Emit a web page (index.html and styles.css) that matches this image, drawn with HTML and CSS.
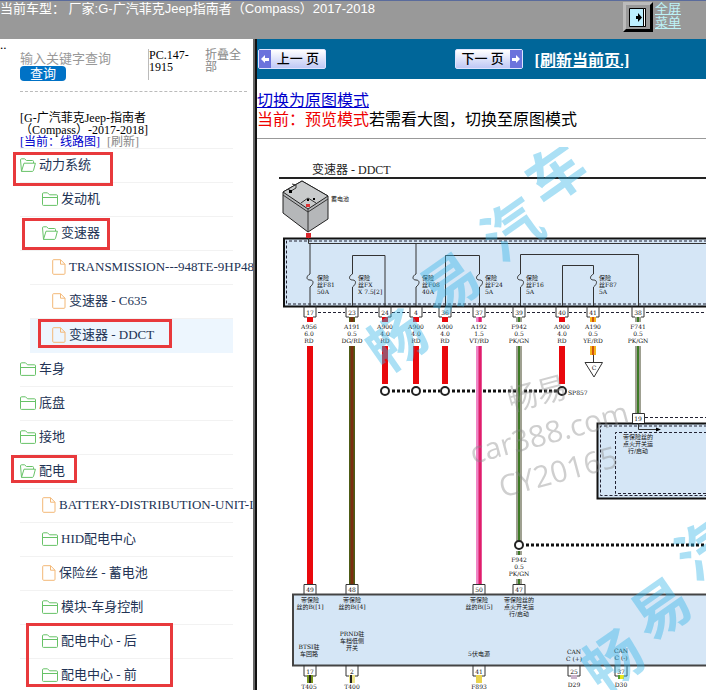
FILE: index.html
```
<!DOCTYPE html>
<html lang="zh-CN">
<head>
  <meta charset="UTF-8">
  <meta name="viewport" content="width=device-width, initial-scale=1.0">
  <title>变速器 - DDCT</title>
  <link rel="stylesheet" href="styles.css">
</head>
<body>
  <svg class="defs" aria-hidden="true">
    <symbol id="folder" viewBox="0 0 16 14">
      <path d="M.5 12.5V2Q.5.8 1.6.8H5.5L7.5 2.8H14.5Q15.5 2.8 15.5 3.8V12.5Q15.5 13.4 14.6 13.4H1.4Q.5 13.4.5 12.5ZM.5 5.5H15.5"/>
    </symbol>
    <symbol id="folder-open" viewBox="0 0 16 14">
      <path d="M1.5 13.4L.5 1.8Q.5.8 1.6.8H4.5L6.5 2.5H12.5Q13.5 2.5 13.5 3.5V5M1.5 13.4L4 5.2H15.4L13.5 12.4Q13.2 13.4 12.3 13.4Z"/>
    </symbol>
    <symbol id="file" viewBox="0 0 14 16">
      <path d="M1.5.7H8.5L13 5.2V14.3Q13 15.3 12 15.3H1.7Q.7 15.3.7 14.3V1.5Q.7.7 1.5.7ZM8.5.7V5.2H13"/>
    </symbol>
  </svg>

  <header class="top">
    <div class="model">当前车型： 厂家:G-广汽菲克Jeep指南者（Compass）2017-2018</div>
    <button type="button" class="toggle" aria-label="全屏菜单">
      <svg width="17" height="19" viewBox="0 0 17 19"><path fill="#bdefff" stroke="#000" d="M.5.5H16.5V18.5H.5Z"/><path fill="#fff" stroke="#000" d="M14.5.5H16.5V18.5H14.5Z"/><path d="M7 8H9V5L13 9.500L9 14V11H7Z"/></svg>
    </button>
    <a href="#" class="fullscreen">全屏<br>菜单</a>
  </header>

  <div class="frames">
    <aside class="side">
      <span class="dots">..</span>
      <form class="search">
        <div class="query">
          <input type="text" placeholder="输入关键字查询" aria-label="输入关键字查询">
          <button type="button">查询</button>
        </div>
        <div class="version">PC.147-1915</div>
        <a href="#" class="fold">折叠全部</a>
      </form>
      <div class="current">
        <div>[G-广汽菲克Jeep-指南者（Compass）-2017-2018]</div>
        <a href="#" class="now">[当前：线路图]</a> <a href="#" class="reload">[刷新]</a>
      </div>

      <ul class="tree">
        <li>
          <div class="row"><a href="#"><svg class="folder"><use href="#folder-open"/></svg>动力系统</a><i class="mark mark-power"></i></div>
          <ul class="sub">
            <li><div class="row"><a href="#"><svg class="folder"><use href="#folder"/></svg>发动机</a></div></li>
            <li>
              <div class="row"><a href="#"><svg class="folder"><use href="#folder-open"/></svg>变速器</a><i class="mark mark-gear"></i></div>
              <ul class="leaf">
                <li><div class="row"><a href="#"><svg class="file"><use href="#file"/></svg>TRANSMISSION---948TE-9HP48</a></div></li>
                <li><div class="row"><a href="#"><svg class="file"><use href="#file"/></svg>变速器 - C635</a></div></li>
                <li><div class="row active"><a href="#"><svg class="file"><use href="#file"/></svg>变速器 - DDCT</a><i class="mark mark-ddct"></i></div></li>
              </ul>
            </li>
          </ul>
        </li>
        <li><div class="row"><a href="#"><svg class="folder"><use href="#folder"/></svg>车身</a></div></li>
        <li><div class="row"><a href="#"><svg class="folder"><use href="#folder"/></svg>底盘</a></div></li>
        <li><div class="row"><a href="#"><svg class="folder"><use href="#folder"/></svg>接地</a></div></li>
        <li>
          <div class="row"><a href="#"><svg class="folder"><use href="#folder-open"/></svg>配电</a><i class="mark mark-dist"></i></div>
          <ul class="sub">
            <li><div class="row"><a href="#"><svg class="file"><use href="#file"/></svg>BATTERY-DISTRIBUTION-UNIT-L</a></div></li>
            <li><div class="row"><a href="#"><svg class="folder"><use href="#folder"/></svg>HID配电中心</a></div></li>
            <li><div class="row"><a href="#"><svg class="file"><use href="#file"/></svg>保险丝 - 蓄电池</a></div></li>
            <li><div class="row"><a href="#"><svg class="folder"><use href="#folder"/></svg>模块-车身控制</a></div></li>
            <li><div class="row"><a href="#"><svg class="folder"><use href="#folder"/></svg>配电中心 - 后</a><i class="mark mark-center"></i></div></li>
            <li><div class="row"><a href="#"><svg class="folder"><use href="#folder"/></svg>配电中心 - 前</a></div></li>
          </ul>
        </li>
      </ul>
    </aside>

    <main class="main">
      <nav class="pager">
        <div class="prev"><button type="button"><svg width="12" height="18" viewBox="0 0 12 18"><path fill="#6b73dc" d="M0 0H12V18H0Z"/><path fill="#fff" d="M2 9L6 5V8H10V11H6V13Z"/></svg><span>上一 页</span></button></div>
        <button type="button"><span>下一 页</span><svg width="12" height="18" viewBox="0 0 12 18"><path fill="#6b73dc" d="M0 0H12V18H0Z"/><path fill="#fff" d="M10 9L6 5V8H2V11H6V13Z"/></svg></button>
        <a href="#">[刷新当前页.]</a>
      </nav>
      <div class="mode">
        <a href="#">切换为原图模式</a>
        <p><span class="red">当前：预览模式</span>若需看大图，切换至原图模式</p>
      </div>
      <hr>
      <svg class="diagram" width="600" height="600" viewBox="257 139 600 600">
        <defs>
          <path id="pin" d="M-6 11V0M6 11V0M-6 11H-3M3 11H6"/>
          <path id="fuse" d="M0-6C-4-4-4 0 0 0S4 4 0 7"/>
          <clipPath id="sheet"><path d="M257 147H857V739H257Z"/></clipPath>
        </defs>

        <text class="title" x="312" y="174">变速器 - DDCT</text>
        <path class="thick" d="M279 178H857"/>

        <!-- battery -->
        <path fill="#b5b7b9" stroke="#222" d="M283 192L302 181L328 196V219L308 232L283 213Z"/>
        <path fill="#c9cbcc" stroke="#222" d="M283 192L302 181L328 196L308 209Z"/>
        <path class="line" d="M283 195L308 212L328 199M308 209V232M301 203L308 198L316 203M288 189L291 191L296 188V185L292 184"/>
        <path fill="#d33" d="M306 204H310V207H306Z"/>
        <path d="M289 190H292V193H289ZM307 199H309V201H307ZM313 198H315V200H313Z"/>
        <text class="label" x="331" y="201">蓄电池</text>

        <!-- modules -->
        <path class="box" d="M284 238.500H857V306.500H284Z"/>
        <path class="dash" d="M857 241H286.500V304H857"/>
        <path class="box" d="M597.500 423.500H857V498.500H597.500Z"/>
        <path class="dash" d="M857 426H600.500V495.500H857M857 432.500H615.500V493.500H857M645 417.500H857"/>
        <path class="box thin" d="M293 594.500H857V665.500H293Z"/>
        <path fill="#d9262c" d="M306 233H311V238H306Z"/>

        <!-- internal wiring -->
        <path class="line" d="M308.500 238V243.500H857M310 243V274M310 287V306M352.500 274V255.500H385V306M352.500 287V306M416 243V274M416 287V306M445.500 306V255.500H479.500V274M479.500 287V306M520.500 274V254.500H638.500V306M520.500 287V306M562.500 306V265.500H593.500V274M593.500 287V306M638.500 423V429.500H657"/>
        <path d="M656 427.500L661 429.500L656 431.500Z"/>
        <g class="line">
          <use href="#fuse" x="310" y="280"/><use href="#fuse" x="352.500" y="280"/><use href="#fuse" x="416" y="280"/>
          <use href="#fuse" x="479.500" y="280"/><use href="#fuse" x="520.500" y="280"/><use href="#fuse" x="593.500" y="280"/>
        </g>
        <g class="label">
          <text x="317" y="280">保险<tspan x="317" y="287">丝F81</tspan><tspan x="317" y="294">50A</tspan></text>
          <text x="358" y="280">保险<tspan x="358" y="287">丝FX</tspan><tspan x="358" y="294">X 7.5[2]</tspan></text>
          <text x="422" y="280">保险<tspan x="422" y="287">丝F08</tspan><tspan x="422" y="294">40A</tspan></text>
          <text x="485" y="280">保险<tspan x="485" y="287">丝F24</tspan><tspan x="485" y="294">5A</tspan></text>
          <text x="526" y="280">保险<tspan x="526" y="287">丝F16</tspan><tspan x="526" y="294">5A</tspan></text>
          <text x="599" y="280">保险<tspan x="599" y="287">丝F87</tspan><tspan x="599" y="294">5A</tspan></text>
        </g>

        <!-- connector pins -->
        <path class="dash" d="M318 312.500H345M360 312.500H378M392 312.500H409M423 312.500H438M452 312.500H472M486 312.500H512M527 312.500H555M569 312.500H586M601 312.500H631M646 312.500H857"/>
        <g class="line">
          <use href="#pin" x="310" y="306"/><use href="#pin" x="352" y="306"/><use href="#pin" x="385" y="306"/>
          <use href="#pin" x="416" y="306"/><use href="#pin" x="445" y="306"/><use href="#pin" x="479" y="306"/>
          <use href="#pin" x="519" y="306"/><use href="#pin" x="562" y="306"/><use href="#pin" x="593" y="306"/>
          <use href="#pin" x="638" y="306"/>
          <use href="#pin" x="310" y="665"/><use href="#pin" x="352" y="665"/><use href="#pin" x="479" y="665"/>
          <use href="#pin" x="574" y="665"/><use href="#pin" x="621" y="665"/>
          <path d="M304 594V584.500H316V594M346 594V584.500H358V594M473 594V584.500H485V594M513 594V584.500H525V594"/>
          <path fill="#fff" d="M632.500 423V413.500H644.500V423"/>
        </g>
        <g class="label center">
          <text x="310" y="315">17</text><text x="352" y="315">23</text><text x="385" y="315">24</text>
          <text x="416" y="315">4</text><text x="445" y="315">36</text><text x="479" y="315">37</text>
          <text x="519" y="315">39</text><text x="562" y="315">40</text><text x="593" y="315">41</text>
          <text x="638" y="315">38</text><text x="638" y="421">19</text>
          <text x="310" y="592">49</text><text x="352" y="592">48</text><text x="479" y="592">50</text><text x="519" y="592">47</text>
          <text x="310" y="674">17</text><text x="352" y="674">2</text><text x="479" y="674">41</text>
          <text x="574" y="674">25</text><text x="621" y="674">37</text>
        </g>
        <g class="label center">
          <text x="309" y="329">A956<tspan x="309" y="336">6.0</tspan><tspan x="309" y="343">RD</tspan></text>
          <text x="352" y="329">A191<tspan x="352" y="336">0.5</tspan><tspan x="352" y="343">DG/RD</tspan></text>
          <text x="385" y="329">A900<tspan x="385" y="336">4.0</tspan><tspan x="385" y="343">RD</tspan></text>
          <text x="416" y="329">A900<tspan x="416" y="336">4.0</tspan><tspan x="416" y="343">RD</tspan></text>
          <text x="445" y="329">A900<tspan x="445" y="336">4.0</tspan><tspan x="445" y="343">RD</tspan></text>
          <text x="479" y="329">A192<tspan x="479" y="336">1.5</tspan><tspan x="479" y="343">VT/RD</tspan></text>
          <text x="519" y="329">F942<tspan x="519" y="336">0.5</tspan><tspan x="519" y="343">PK/GN</tspan></text>
          <text x="562" y="329">A900<tspan x="562" y="336">4.0</tspan><tspan x="562" y="343">RD</tspan></text>
          <text x="593" y="329">A190<tspan x="593" y="336">0.5</tspan><tspan x="593" y="343">YE/RD</tspan></text>
          <text x="638" y="329">F741<tspan x="638" y="336">0.5</tspan><tspan x="638" y="343">PK/GN</tspan></text>
        </g>

        <!-- wires -->
        <path class="wire" stroke="#e9080d" d="M310 317V322M385 317V322M416 317V322M445 317V322M562 317V322M310 346V584M385 346V384M416 346V384M445 346V384M562 346V384"/>
        <path class="wire" stroke="#4d5c16" d="M352 317V322M352 346V584"/>
        <path stroke="#7b2e10" stroke-width="3" d="M352 317V322M352 346V584"/>
        <path class="wire" stroke="#ee86c6" d="M479 317V322M479 346V584"/>
        <path stroke="#e01f68" stroke-width="3" d="M480 317V322M480 346V584"/>
        <path class="wire" stroke="#9fa091" d="M519 317V322M519 346V541M519 551V555M519 579V584M638 317V322M638 346V413"/>
        <path stroke="#3d7a25" stroke-width="2" d="M519 317V322M519 346V541M519 551V555M519 579V584M638 317V322M638 346V413"/>
        <path class="wire" stroke="#f6b51e" d="M593 317V322M593 346V355"/>
        <path stroke="#d3540c" stroke-width="2" d="M593 317V322M593 346V355"/>
        <path class="line" d="M593.500 355V362M585 362.500H602.500L594 377Z"/>
        <path class="wire" stroke="#77951b" d="M310 675V683"/>
        <path class="wire" stroke="#eee58a" d="M352 675V683"/>
        <path stroke="#222" stroke-width="2" d="M310 675V683M351 675V683"/>
        <path class="wire" stroke="#e9d34e" d="M479 675V683"/>
        <path class="wire" stroke="#c9b2ca" d="M574 675V679"/>
        <path class="wire" stroke="#e8e51c" d="M621 675V679"/>
        <path stroke="#55a02b" stroke-width="2" d="M619 675V679"/>

        <!-- splices -->
        <path class="splice" d="M392 391H411M423 391H440M452 391H476M483 391H516M524 391H557M526 545H857"/>
        <g class="ring">
          <circle cx="385" cy="391" r="4"/><circle cx="416" cy="391" r="4"/><circle cx="445" cy="391" r="4"/>
          <circle cx="562" cy="391" r="4"/><circle cx="519" cy="545" r="4"/>
        </g>
        <text class="label" x="568" y="395">SP857</text>

        <g class="label center">
          <text x="594" y="370">C</text>
          <text x="638" y="439">带保险丝的<tspan x="638" y="446">点火开关运</tspan><tspan x="638" y="453">行/启动</tspan></text>
          <text x="519" y="562">F942<tspan x="519" y="569">0.5</tspan><tspan x="519" y="576">PK/GN</tspan></text>
          <text x="310" y="602">带保险<tspan x="310" y="609">丝的B([1]</tspan></text>
          <text x="352" y="602">带保险<tspan x="352" y="609">丝的B([4]</tspan></text>
          <text x="479" y="602">带保险<tspan x="479" y="609">丝的B([5]</tspan></text>
          <text x="519" y="602">带保险丝的<tspan x="519" y="609">点火开关运</tspan><tspan x="519" y="616">行/启动</tspan></text>
          <text x="309" y="649">BTSI驻<tspan x="309" y="656">车回路</tspan></text>
          <text x="352" y="636">PRND驻<tspan x="352" y="643">车档低侧</tspan><tspan x="352" y="650">开关</tspan></text>
          <text x="479" y="656">5伏电源</text>
          <text x="574" y="654">CAN<tspan x="574" y="661">C (+)</tspan></text>
          <text x="621" y="653">CAN<tspan x="621" y="660">C (-)</tspan></text>
          <text x="309" y="689">T405</text><text x="352" y="689">T400</text><text x="479" y="689">F893</text>
          <text x="574" y="687">D29</text><text x="621" y="687">D30</text>
        </g>

        <!-- watermarks -->
        <g clip-path="url(#sheet)">
          <g class="brush">
            <text transform="translate(397 341) rotate(-35)" y="21">畅</text>
            <text transform="translate(450 284) rotate(-35)" y="21">易</text>
            <text transform="translate(512 230) rotate(-35)" y="21">汽</text>
            <text transform="translate(556 174) rotate(-35)" y="21">车</text>
            <text transform="translate(613 661) rotate(-35)" y="21">畅</text>
            <text transform="translate(661 609) rotate(-35)" y="21">易</text>
            <text transform="translate(706 549) rotate(-35)" y="21">汽</text>
          </g>
        </g>
        <g class="stamp">
          <text transform="translate(540 404) rotate(-15)">畅易</text>
          <text transform="translate(552 443) rotate(-15)">car388.com</text>
          <text transform="translate(561 482) rotate(-15)">CY20165</text>
        </g>
      </svg>
    </main>
  </div>
</body>
</html>
```

FILE: styles.css
```
* { box-sizing: border-box; }
body { margin: 0; height: 100vh; display: flex; flex-direction: column; overflow: hidden; background: #fff; font-family: "Liberation Serif", "Noto Sans CJK SC", serif; font-size: 13px; }
ul { list-style: none; margin: 0; padding: 0; }
a { text-decoration: none; }
button { font-family: inherit; cursor: pointer; }
.defs { display: none; }

/* top bar */
.top { flex: none; display: flex; align-items: flex-start; height: 39px; padding-right: 25px; background: #999; border-top: 1px solid #5a6b9c; color: #fff; font-family: "Liberation Sans", "Noto Sans CJK SC", sans-serif; }
.model { flex: 1; line-height: 16px; white-space: nowrap; }
.toggle { display: flex; align-items: center; justify-content: center; width: 30px; height: 30px; margin: 1px 2px 0 0; padding: 0; background: #999; border: 3px solid; border-color: #bbb #000 #000 #bbb; }
.fullscreen { padding-top: 1px; color: #bdf3f7; line-height: 14px; text-decoration: underline; }

.frames { flex: 1; min-height: 0; display: flex; }

/* left menu */
.side { position: relative; flex: none; width: 255px; padding: 10px 0 0 20px; overflow: hidden; border-right: 2px solid #666; }
.dots { position: absolute; left: 0; top: 0; line-height: 12px; }
.search { display: flex; align-items: flex-start; height: 43px; margin-right: 6px; border-bottom: 1px dashed #bbb; font-size: 12px; line-height: 12px; }
.query { display: flex; flex-direction: column; align-items: flex-start; width: 128px; }
.query input { width: 91px; height: 17px; padding: 3px 0 0; border: 0; outline: 0; font-family: inherit; font-size: 13px; line-height: 14px; }
.query input::placeholder { color: #999; }
.query button { width: 46px; height: 15px; padding: 0; border: 0; border-radius: 4px; background: #0072c6; color: #fff; font-size: 13px; line-height: 15px; }
.version { width: 57px; height: 31px; border-left: 1px solid #bbb; }
.fold { width: 38px; color: #888; word-break: break-all; }
.current { height: 57px; margin-right: 20px; padding-top: 20px; border-bottom: 1px solid #f2f2f2; font-size: 12px; line-height: 12px; }
.current div { width: 132px; }
.now { color: #00c; }
.reload { margin-left: 4px; color: #888; }

.row { position: relative; height: 34px; margin-right: 20px; border-bottom: 1px solid #f2f2f2; line-height: 32px; white-space: nowrap; }
.row a { display: flex; align-items: center; color: #223355; }
.sub .row a { padding-left: 22px; }
.leaf .row { margin-left: 10px; }
.active { background: #edf6fe; border-color: #edf6fe; }
.row svg { flex: none; margin-right: 3px; fill: none; }
.folder { width: 16px; height: 14px; stroke: #67c267; }
.file { width: 14px; height: 16px; stroke: #f3b877; }

/* red frames over the menu */
.mark { position: absolute; z-index: 1; border: 3px solid #e8393c; pointer-events: none; }
.mark-power { left: -7px; top: 3px; width: 100px; height: 34px; }
.mark-gear { left: 2px; top: 1px; width: 88px; height: 32px; }
.mark-ddct { left: 8px; top: 0; width: 134px; height: 29px; }
.mark-dist { left: -9px; top: 0; width: 66px; height: 28px; }
.mark-center { left: 6px; top: -2px; width: 147px; height: 64px; }

/* right page */
.main { flex: 1; min-width: 0; overflow: hidden; border-left: 2px solid #111; font-size: 16px; }
.pager { display: flex; align-items: center; height: 40px; background: #069; }
.prev { width: 44%; padding-left: 1px; }
.pager button { display: flex; align-items: center; width: 68px; height: 20px; padding: 0; border: 1px solid #dfe4ff; border-radius: 2px; background: linear-gradient(#fff, #bfc8f6); font-size: 13px; font-weight: 500; line-height: 18px; }
.pager button span { flex: 1; text-align: center; white-space: nowrap; }
.pager a { margin-left: 12px; color: #fff; font-weight: bold; text-decoration: underline; }
.mode { padding-top: 12px; line-height: 19px; white-space: nowrap; }
.mode a { color: #00c; text-decoration: underline; }
.mode p { margin: 0; }
.red { color: #e00; }
hr { margin: 9px 0 0; border: 0; border-top: 1px solid #999; }

/* wiring diagram */
.diagram { display: block; }
.title { font-size: 12px; fill: #222; }
.label { font-family: "DejaVu Serif", "Noto Sans CJK SC", serif; font-size: 6px; fill: #111; }
.center { text-anchor: middle; }
.line { fill: none; stroke: #333; stroke-width: 1; }
.thick { stroke: #222; stroke-width: 2; }
.box { fill: #d5e6f6; stroke: #111; stroke-width: 2; }
.thin { stroke: #444; }
.dash { fill: none; stroke: #223; stroke-width: 1; stroke-dasharray: 3 2; }
.wire { stroke-width: 6; }
.splice { stroke: #111; stroke-width: 3; stroke-dasharray: 3 2; }
.ring { fill: #fff; stroke: #222; stroke-width: 2; }
.brush { font-family: "Noto Sans CJK SC", sans-serif; font-size: 58px; font-weight: bold; fill: #38b6e8; opacity: .42; text-anchor: middle; }
.stamp { font-family: "Open Sans", "Noto Sans CJK SC", sans-serif; font-size: 30px; fill: #888; opacity: .4; text-anchor: middle; }
```
